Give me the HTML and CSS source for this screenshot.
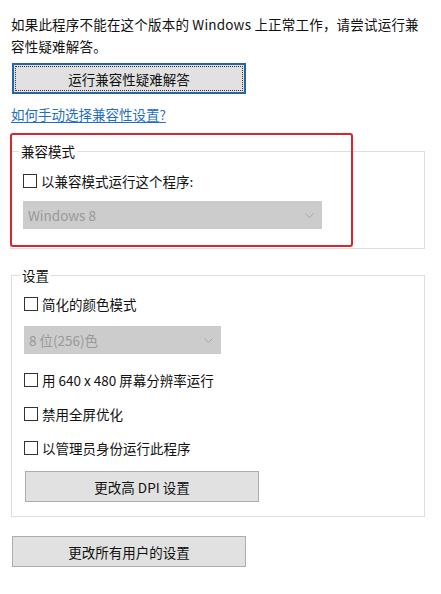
FILE: index.html
```html
<!DOCTYPE html>
<html lang="zh-CN">
<head>
<meta charset="utf-8">
<title>兼容性</title>
<link rel="stylesheet" href="styles.css">
</head>
<body>
<div class="page">
  <p class="intro">如果此程序不能在这个版本的 Windows 上正常工作，请尝试运行兼<br>容性疑难解答。</p>
  <button class="btn btn-default btn-top" type="button">运行兼容性疑难解答</button>
  <a class="link" href="#">如何手动选择兼容性设置?</a>

  <fieldset class="group group-compat">
    <legend class="legend">兼容模式</legend>
    <label class="check check-first"><span class="box"></span><span>以兼容模式运行这个程序:</span></label>
    <div class="combo combo-wide"><span>Windows 8</span><svg class="chev" width="9" height="5" viewBox="0 0 9 5"><polyline points="0.5,0.5 4.5,4.5 8.5,0.5" fill="none" stroke="#a8a8a8" stroke-width="1"/></svg></div>
  </fieldset>

  <fieldset class="group group-settings">
    <legend class="legend">设置</legend>
    <label class="check check-first2"><span class="box"></span><span>简化的颜色模式</span></label>
    <div class="combo combo-narrow"><span>8 位(256)色</span><svg class="chev" width="9" height="5" viewBox="0 0 9 5"><polyline points="0.5,0.5 4.5,4.5 8.5,0.5" fill="none" stroke="#a8a8a8" stroke-width="1"/></svg></div>
    <label class="check check-after-combo"><span class="box"></span><span>用 640 x 480 屏幕分辨率运行</span></label>
    <label class="check check-next"><span class="box"></span><span>禁用全屏优化</span></label>
    <label class="check check-next"><span class="box"></span><span>以管理员身份运行此程序</span></label>
    <button class="btn btn-dpi" type="button">更改高 DPI 设置</button>
  </fieldset>

  <button class="btn btn-all" type="button">更改所有用户的设置</button>

  <div class="highlight"></div>
</div>
</body>
</html>
```

FILE: styles.css
```css
html, body {
  margin: 0;
  padding: 0;
  background: #ffffff;
}

.page {
  position: relative;
  width: 441px;
  height: 594px;
  box-sizing: border-box;
  padding: 13px 0 0 10px;
  font-family: "Noto Sans CJK SC", "Noto Sans", sans-serif;
  font-size: 13.5px;
  line-height: 22px;
  color: #111111;
  display: flex;
  flex-direction: column;
  align-items: flex-start;
}

.intro {
  margin: 0 0 0 1px;
  white-space: nowrap;
  letter-spacing: 0.2px;
}

.btn {
  font-family: inherit;
  font-size: 13.5px;
  line-height: 20px;
  color: #111111;
  background: #e1e1e1;
  border: 1px solid #adadad;
  border-radius: 0;
  width: 234px;
  height: 31px;
  padding: 0;
  margin: 0;
  box-sizing: border-box;
}

.btn-default {
  border: 1px solid #2a64a8;
  box-shadow: inset 0 0 0 1px #2a64a8;
  outline: 1px dotted #333;
  outline-offset: -4px;
}

.btn-top {
  margin: 6px 0 0 2px;
}

.link {
  margin: 9px 0 0 1px;
  color: #1f6fc4;
  text-decoration: underline;
  text-underline-offset: 2px;
}

.group {
  margin: 15px 0 0 0;
  padding: 0 12px 0 12px;
  border: 1px solid #dedede;
  width: 415px;
  box-sizing: border-box;
  display: flex;
  flex-direction: column;
  align-items: flex-start;
  min-width: 0;
}

.group-compat {
  padding-bottom: 19px;
}

.group-settings {
  margin-left: 1px;
  width: 414px;
  padding-bottom: 14px;
}

.legend {
  margin-left: -4px;
  padding: 0 2px;
  line-height: 22px;
}

.check {
  display: flex;
  align-items: center;
  gap: 4px;
  height: 22px;
}

.box {
  width: 14px;
  height: 14px;
  box-sizing: border-box;
  border: 1px solid #333333;
  background: #ffffff;
  flex: none;
}

.check-first {
  margin-top: 8px;
}

.check-first2 {
  margin-top: 7px;
}

.check-after-combo {
  margin-top: 15px;
}

.check-next {
  margin-top: 12px;
}

.combo {
  display: flex;
  align-items: center;
  justify-content: space-between;
  height: 28px;
  box-sizing: border-box;
  padding: 0 8px 0 5px;
  background: #cccccc;
  color: #999999;
}

.combo-wide {
  width: 299px;
  margin-top: 9px;
}

.combo-narrow {
  width: 197px;
  margin-top: 11px;
}

.chev {
  display: block;
}

.btn-dpi {
  margin: 12px 0 0 1px;
}

.btn-all {
  margin: 19px 0 0 2px;
}

.highlight {
  position: absolute;
  left: 10px;
  top: 133px;
  width: 343px;
  height: 114px;
  box-sizing: border-box;
  border: 2px solid #d9262c;
  border-radius: 3px;
  pointer-events: none;
}
```
